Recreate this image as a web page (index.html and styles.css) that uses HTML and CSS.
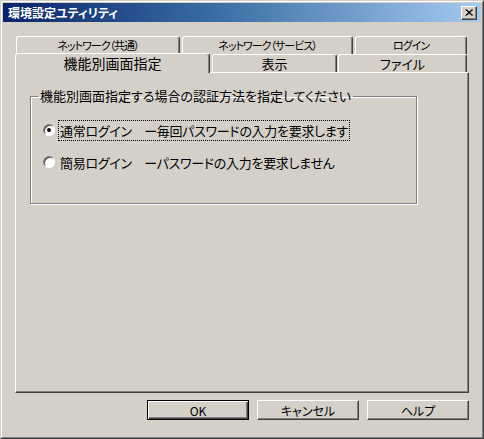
FILE: index.html
```html
<!DOCTYPE html>
<html>
  <head>
    <meta charset="utf-8">
    <title>環境設定ユティリティ</title>
    <link rel="stylesheet" href="styles.css">
  </head>
<body>

  <div class="frame">
    <div class="frameInner">

      <div class="titlebar">
        <span class="titleText">環境設定ユティリティ</span>
        <span class="closeBtn">
          <svg width="8" height="7" viewBox="0 0 8 7">
            <path d="M0.5 0.5 L7 6.5 M1.5 0.5 L8 6.5 M7 0.5 L0.5 6.5 M8 0.5 L1.5 6.5" stroke="#000" stroke-width="1" fill="none"/>
          </svg>
        </span>
      </div>

      <div class="dialog">

        <div class="tabstrip">
          <div class="tabrow rowBack">
            <div class="tab t1">ネットワーク（共通）</div>
            <div class="tab t2">ネットワーク（サービス）</div>
            <div class="tab t3">ログイン</div>
          </div>
          <div class="tabrow rowFront">
            <div class="tab selected t4">機能別画面指定</div>
            <div class="tab t5">表示</div>
            <div class="tab t6">ファイル</div>
          </div>
        </div>

        <div class="panel">
          <fieldset class="group">
            <legend>機能別画面指定する場合の認証方法を指定してください</legend>
            <div class="option first">
              <span class="radio"><span class="dot"></span></span>
              <span class="label focus">通常ログイン　ー毎回パスワードの入力を要求します</span>
            </div>
            <div class="option">
              <span class="radio"></span>
              <span class="label">簡易ログイン　ーパスワードの入力を要求しません</span>
            </div>
          </fieldset>
        </div>

        <div class="btnRow">
          <div class="btn default">OK</div>
          <div class="btn">キャンセル</div>
          <div class="btn">ヘルプ</div>
        </div>

      </div>
    </div>
  </div>

</body>
</html>
```

FILE: styles.css
```css
html
{
  width: 100%;
  height: 100%;
  background-color: #d4d0c8;
}
body
{
  width: 484px;
  height: 439px;
  margin: 0;
  padding: 0;
  font-family: "Noto Sans CJK JP", "Noto Sans", sans-serif;
  font-feature-settings: "palt";
  font-size: 12px;
  color: #000;
  overflow: hidden;
}
.frame
{
  width: 484px;
  height: 439px;
  box-sizing: border-box;
  border: 1px solid;
  border-color: #d4d0c8 #404040 #404040 #d4d0c8;
  background-color: #d4d0c8;
}
.frameInner
{
  height: 100%;
  box-sizing: border-box;
  border: 1px solid;
  border-color: #fff #808080 #808080 #fff;
  padding: 1px;
  display: flex;
  flex-direction: column;
}
.titlebar
{
  height: 19px;
  display: flex;
  align-items: center;
  justify-content: space-between;
  padding: 0 4px 0 5px;
  background: linear-gradient(to right, #0a246a, #3a6ea5 45%, #a6caf0);
}
.titleText
{
  color: #fff;
  font-weight: bold;
  font-size: 12px;
  line-height: 1;
}
.closeBtn
{
  width: 16px;
  height: 14px;
  box-sizing: border-box;
  display: flex;
  align-items: center;
  justify-content: center;
  background-color: #d4d0c8;
  border: 1px solid;
  border-color: #fff #404040 #404040 #fff;
  box-shadow: inset -1px -1px 0 #808080;
}
.dialog
{
  flex: 1;
  display: flex;
  flex-direction: column;
  padding: 14px 12px 0 12px;
}
.tabstrip
{
  width: 454px;
  display: flex;
  flex-direction: column;
}
.tabrow
{
  display: flex;
  align-items: flex-end;
  height: 18px;
}
.rowBack
{
  padding-left: 1px;
  gap: 2px;
}
.rowBack .tab
{
  font-size: 11px;
  letter-spacing: -1px;
}
.rowFront
{
  position: relative;
  z-index: 1;
}
.tab
{
  height: 18px;
  box-sizing: border-box;
  display: flex;
  align-items: center;
  justify-content: center;
  border-top: 1px solid #fff;
  border-left: 1px solid #fff;
  border-right: 1px solid #404040;
  box-shadow: inset -1px 0 0 #808080;
  border-radius: 3px 3px 0 0;
  background-color: #d4d0c8;
  font-size: 12px;
  line-height: 1;
}
.t1 { width: 164px; }
.t2 { width: 171px; }
.t3 { width: 112px; }
.t4 { width: 195px; }
.t5 { width: 125px; margin-left: 2px; font-size: 13px; }
.t6 { width: 129px; margin-left: 1px; font-size: 13px; }
.selected
{
  height: 20px;
  margin-bottom: -1px;
  padding-bottom: 1px;
  font-size: 14px;
}
.panel
{
  width: 454px;
  height: 321px;
  box-sizing: border-box;
  border: 1px solid;
  border-color: #fff #404040 #404040 #fff;
  box-shadow: inset -1px -1px 0 #808080;
  padding: 16px 0 0 14px;
}
.group
{
  width: 387px;
  height: 115px;
  box-sizing: border-box;
  margin: 0;
  padding: 0 0 0 12px;
  border: 1px solid #808080;
  box-shadow: 1px 1px 0 #fff, inset 1px 1px 0 #fff;
}
.group legend
{
  padding: 0 2px;
  margin-left: -5px;
  font-size: 13px;
  line-height: 14px;
}
.option
{
  display: flex;
  align-items: center;
  gap: 3px;
  height: 22px;
  margin-top: 10px;
}
.option.first
{
  margin-top: 16px;
}
.radio
{
  width: 12px;
  height: 12px;
  box-sizing: border-box;
  border-radius: 50%;
  background-color: #fff;
  border: 1px solid;
  border-color: #808080 #fff #fff #808080;
  box-shadow: inset 1px 1px 0 #404040;
  display: flex;
  align-items: center;
  justify-content: center;
}
.dot
{
  width: 4px;
  height: 4px;
  border-radius: 50%;
  background-color: #000;
}
.label
{
  padding: 1px 1px;
  border: 1px solid transparent;
  font-size: 13px;
  line-height: 17px;
  letter-spacing: -0.3px;
}
.focus
{
  border: 1px dotted #000;
}
.btnRow
{
  display: flex;
  justify-content: flex-end;
  gap: 8px;
  margin-top: 7px;
}
.btn
{
  width: 102px;
  height: 20px;
  box-sizing: border-box;
  display: flex;
  align-items: center;
  justify-content: center;
  background-color: #d4d0c8;
  border: 1px solid;
  border-color: #fff #404040 #404040 #fff;
  box-shadow: inset -1px -1px 0 #808080;
  font-size: 12px;
}
.btn.default
{
  border: 1px solid #000;
  box-shadow: inset 1px 1px 0 #fff, inset -1px -1px 0 #404040, inset -2px -2px 0 #808080;
}
```
